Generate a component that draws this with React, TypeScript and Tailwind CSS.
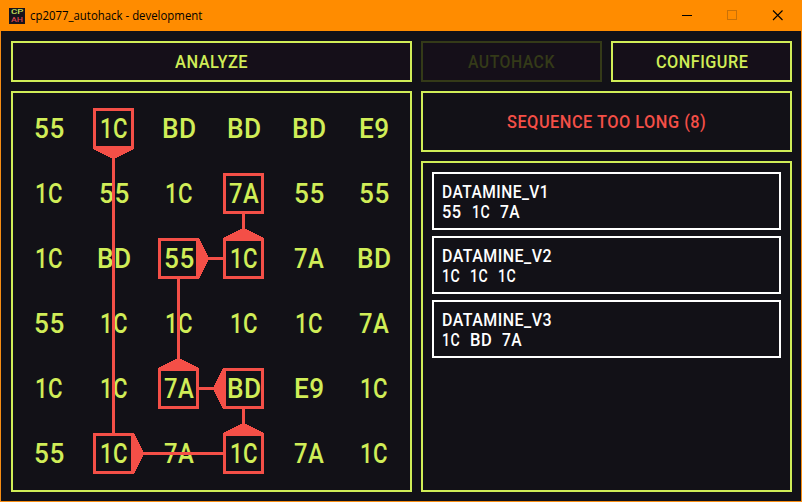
import { useLayoutEffect, useRef, useState } from "react";

// Text squeezed horizontally so that it fills exactly `w` pixels.
function Fit({ w, children }: { w: number; children: string }) {
  const ref = useRef<HTMLSpanElement>(null);
  const [scale, setScale] = useState(1);
  useLayoutEffect(() => {
    if (ref.current) setScale(w / ref.current.offsetWidth);
  }, [w, children]);
  return (
    <span className="inline-flex" style={{ width: w }}>
      <span
        ref={ref}
        className="shrink-0 origin-left whitespace-pre"
        style={{ transform: `scaleX(${scale})` }}
      >
        {children}
      </span>
    </span>
  );
}

const matrix = [
  ["55", "1C", "BD", "BD", "BD", "E9"],
  ["1C", "55", "1C", "7A", "55", "55"],
  ["1C", "BD", "55", "1C", "7A", "BD"],
  ["55", "1C", "1C", "1C", "1C", "7A"],
  ["1C", "1C", "7A", "BD", "E9", "1C"],
  ["55", "1C", "7A", "1C", "7A", "1C"],
];

const codeWidth: Record<string, number> = { "55": 31, "1C": 28, BD: 35, "7A": 30, E9: 31 };

// Visited cells as [row, column], in order.
const path = [
  [0, 1],
  [5, 1],
  [5, 3],
  [4, 3],
  [4, 2],
  [2, 2],
  [2, 3],
  [1, 3],
];

const center = (i: number) => i * 65 + 32.5;

function PathOverlay() {
  return (
    <svg
      className="pointer-events-none absolute left-[3px] top-[3px]"
      width="390"
      height="390"
      shapeRendering="crispEdges"
    >
      {path.map(([r, c], i) => {
        const x = center(c);
        const y = center(r);
        const next = path[i + 1];
        const dx = next ? Math.sign(next[1] - c) : 0;
        const dy = next ? Math.sign(next[0] - r) : 0;
        return (
          <g key={i}>
            {next && (
              <>
                <line
                  x1={x + dx * 20}
                  y1={y + dy * 20}
                  x2={center(next[1]) - dx * 20}
                  y2={center(next[0]) - dy * 20}
                  stroke="#f44f47"
                  strokeWidth="3"
                />
                <polygon
                  fill="#f44f47"
                  points={`${x + dx * 20.5 - dy * 20.5},${y + dy * 20.5 + dx * 20.5} ${x + dx * 20.5 + dy * 20.5},${y + dy * 20.5 - dx * 20.5} ${x + dx * 30.5},${y + dy * 30.5}`}
                />
              </>
            )}
            <rect x={x - 19} y={y - 19} width="38" height="38" fill="none" stroke="#f44f47" strokeWidth="3" />
          </g>
        );
      })}
    </svg>
  );
}

const daemons = [
  { name: "DATAMINE_V1", w: 107, codes: [["55", 20, 10], ["1C", 18, 10], ["7A", 20, 0]] },
  { name: "DATAMINE_V2", w: 110, codes: [["1C", 18, 10], ["1C", 18, 10], ["1C", 18, 0]] },
  { name: "DATAMINE_V3", w: 110, codes: [["1C", 18, 10], ["BD", 22, 10], ["7A", 20, 0]] },
] as { name: string; w: number; codes: [string, number, number][] }[];

function TitleBar() {
  return (
    <header className="flex h-[31px] shrink-0 items-center bg-[#ff8c00] pl-[9px] font-['Open_Sans','Noto_Sans',sans-serif] text-[12px] text-black">
      <div className="flex size-4 flex-col items-center bg-[#17131c] font-['Roboto',sans-serif] text-[8px] font-medium leading-[8px]">
        <span className="flex h-2 text-[#c5e05a]">
          <Fit w={12}>CP</Fit>
        </span>
        <span className="flex h-2 text-[#d8454a]">
          <Fit w={12}>AH</Fit>
        </span>
      </div>
      <div className="ml-[5px] flex-1 pt-px leading-4">
        <Fit w={172}>cp2077_autohack - development</Fit>
      </div>
      <svg width="120" height="31" className="shrink-0" fill="none">
        <path d="M0 15.5h10" stroke="#000" />
        <rect x="45.5" y="10.5" width="9" height="9" stroke="#c97107" />
        <path d="M91 10.5l9.5 9.5M100.5 10.5l-9.5 9.5" stroke="#000" strokeWidth="1.1" />
      </svg>
    </header>
  );
}

export default function App() {
  return (
    <div className="flex h-[502px] w-[802px] flex-col overflow-hidden bg-[#121117] font-['Roboto',sans-serif] text-[18px] font-medium text-[#d0ed57]">
      <TitleBar />
      <main className="flex flex-1 gap-[9px] border-x border-b border-[#f68d14] pt-[10px] pr-[9px] pb-[9px] pl-[10px] tracking-[0.03em]">
        <section className="flex w-[401px] flex-col gap-[9px]">
          <button className="flex h-[41px] items-center justify-center border-2 border-[#d0ed57] bg-[#150f19]">
            <Fit w={73}>ANALYZE</Fit>
          </button>
          <div className="relative h-[401px] border-2 border-[#d0ed57] pt-[3px] pl-[3px]">
            <div className="grid w-[390px] grid-cols-6 text-[27px]">
              {matrix.flat().map((code, i) => (
                <div key={i} className="flex h-[65px] items-center justify-center pt-[2px] pl-px">
                  <Fit w={codeWidth[code]}>{code}</Fit>
                </div>
              ))}
            </div>
            <PathOverlay />
          </div>
        </section>
        <section className="flex w-[371px] flex-col gap-[9px]">
          <div className="flex gap-[9px]">
            <button className="flex h-[41px] w-[181px] items-center justify-center border-2 border-[#343a18] bg-[#150f19] text-[#343a18]">
              <Fit w={87}>AUTOHACK</Fit>
            </button>
            <button className="flex h-[41px] w-[181px] items-center justify-center border-2 border-[#d0ed57] bg-[#150f19]">
              <Fit w={92}>CONFIGURE</Fit>
            </button>
          </div>
          <div className="flex h-[61px] items-center justify-center border-2 border-[#d0ed57] text-[#f44f47]">
            <Fit w={199}>SEQUENCE TOO LONG (8)</Fit>
          </div>
          <div className="flex h-[331px] flex-col gap-[6px] border-2 border-[#d0ed57] p-[9px] text-white">
            {daemons.map((d) => (
              <div key={d.name} className="h-[58px] border-2 border-white px-2 pt-2 leading-5">
                <div className="flex h-5">
                  <Fit w={d.w}>{d.name}</Fit>
                </div>
                <div className="flex h-5">
                  {d.codes.map(([code, w, gap], i) => (
                    <span key={i} className="flex" style={{ marginRight: gap }}>
                      <Fit w={w}>{code}</Fit>
                    </span>
                  ))}
                </div>
              </div>
            ))}
          </div>
        </section>
      </main>
    </div>
  );
}
